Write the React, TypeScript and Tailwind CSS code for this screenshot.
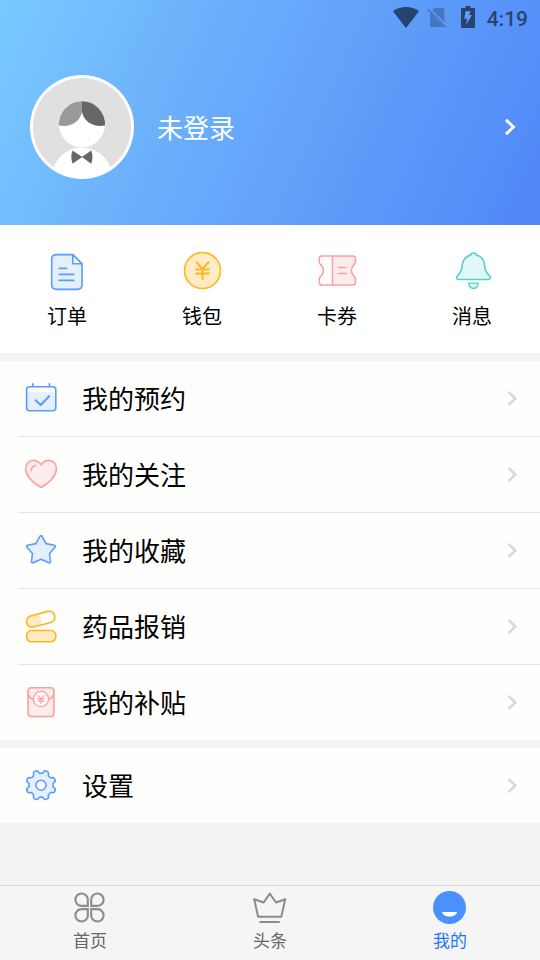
import type { ReactNode } from "react";

interface Item {
  label: string;
  icon: ReactNode;
}

const BLUE = "#5a9cff";
const BLUE_FILL = "#e6effd";
const PINK = "#ff9f9f";
const PINK_FILL = "#fdecec";
const YELLOW = "#ffb51c";
const YELLOW_FILL = "#ffecc5";
const TEAL = "#55d2cf";
const TEAL_FILL = "#e1f8f7";

// Eight rounded teeth around the center
const gearPoints = Array.from({ length: 144 }, (_, i) => {
  const a = (i / 144) * Math.PI * 2;
  const r = 13.45 - 1.6 * Math.tanh(2.2 * Math.cos(8 * a));
  return `${(20.2 + r * Math.sin(a)).toFixed(2)},${(20.2 - r * Math.cos(a)).toFixed(2)}`;
}).join(" ");

function QuickIcon({ children }: { children: ReactNode }) {
  return (
    <svg width="41" height="40" viewBox="0 0 41 40" fill="none" strokeWidth="1.6" strokeLinecap="round" strokeLinejoin="round">
      {children}
    </svg>
  );
}

function RowIcon({ children }: { children: ReactNode }) {
  return (
    <svg width="41" height="41" viewBox="0.2 0 41 41" fill="none" strokeWidth="1.6" strokeLinecap="round" strokeLinejoin="round">
      {children}
    </svg>
  );
}

const quickItems: Item[] = [
  {
    label: "订单",
    icon: (
      <QuickIcon>
        <g stroke={BLUE}>
          <path d="M9.3 3.6H25.8L35.1 12.8V33.8Q35.1 38.4 30.5 38.4H9.3Q4.7 38.4 4.7 33.8V8.2Q4.7 3.6 9.3 3.6Z" fill={BLUE_FILL} />
          <path d="M25.8 3.8V12.7H34.8Z" fill="#fff" />
          <path d="M12.2 17.4H19.6M12.2 23.4H27M12.2 29.4H27" />
        </g>
      </QuickIcon>
    ),
  },
  {
    label: "钱包",
    icon: (
      <QuickIcon>
        <g stroke={YELLOW}>
          <circle cx="20.5" cy="19.5" r="18" fill={YELLOW_FILL} />
          <path d="M14.6 11.4L20.5 18.2L26.4 11.4M20.5 18.2V28.2M14.2 18.4H26.9M14.2 22.6H26.9" strokeWidth="2" />
        </g>
      </QuickIcon>
    ),
  },
  {
    label: "卡券",
    icon: (
      <QuickIcon>
        <path d="M15.3 5H35.8Q38.5 5 38.5 8V11.7C38.5 14 34.3 14.5 34.3 19.5C34.3 24.5 38.5 25 38.5 27.3V31.2Q38.5 34 35.8 34H15.3Z" fill={PINK_FILL} />
        <g stroke={PINK}>
          <path d="M5 5H35.8Q38.5 5 38.5 7.6V11.2C38.5 13.7 34.3 14.5 34.3 19.5C34.3 24.5 38.5 25.3 38.5 27.8V31.4Q38.5 34 35.8 34H5Q2.3 34 2.3 31.4V27.8C2.3 25.3 6.5 24.5 6.5 19.5C6.5 14.5 2.3 13.7 2.3 11.2V7.6Q2.3 5 5 5Z" />
          <path d="M15.4 5V34M21.4 16.6H29M21.4 22.4H29" strokeWidth="1.5" />
        </g>
      </QuickIcon>
    ),
  },
  {
    label: "消息",
    icon: (
      <QuickIcon>
        <g stroke={TEAL} fill={TEAL_FILL}>
          <path d="M18.7 4.1C19.2 1.2 23.8 1.2 24.3 4.1C30 5.6 32.4 9.6 32.6 14.4C32.8 19.5 34 21.6 37.3 24.7C39.3 26.6 38.3 28.5 36.3 28.5H6.7C4.5 28.5 3.8 26.5 5.5 24.7C8.7 21.6 10 19.3 10.2 14.4C10.5 9.6 12.8 5.6 18.7 4.1Z" />
          <path d="M16.7 32.1H26.2C26.3 39.2 16.6 39.2 16.7 32.1Z" strokeWidth="1.4" />
        </g>
      </QuickIcon>
    ),
  },
];

const menuItems: Item[] = [
  {
    label: "我的预约",
    icon: (
      <RowIcon>
        <path d="M6 14.3H35V31Q35 33 33 33H8Q6 33 6 31Z" fill={BLUE_FILL} />
        <g stroke={BLUE}>
          <rect x="5.8" y="8.8" width="29.2" height="24" rx="3" />
          <path d="M12 5.9V8.3M28.6 5.9V8.3" strokeWidth="1.8" />
          <path d="M14.8 22.3L19.9 27L28.4 18.2" strokeWidth="2.1" />
        </g>
      </RowIcon>
    ),
  },
  {
    label: "我的关注",
    icon: (
      <RowIcon>
        <g stroke={PINK}>
          <path d="M20.3 10.8C22.3 7.6 25 6.4 28 6.4C32.6 6.4 35.6 10 35.6 14.7C35.6 22.5 29.2 28.2 20.3 33.5C11.2 28.2 4.9 22.5 4.9 14.7C4.9 10 8 6.4 12.6 6.4C15.6 6.4 18.3 7.6 20.3 10.8Z" fill={PINK_FILL} />
          <path d="M10.3 16.7C10.5 13.8 12.2 12 14.8 11.5" />
        </g>
      </RowIcon>
    ),
  },
  {
    label: "我的收藏",
    icon: (
      <RowIcon>
        <path
          d="M19.2 6.2Q20.2 4.9 21.2 6.2L25.3 13.6L33.5 15.3Q35.2 15.8 34.3 17.3L28.7 23.5L29.7 31.5Q29.8 33.3 28.1 32.8L20.2 29.2L12.3 32.8Q10.6 33.3 10.7 31.5L11.7 23.5L6.1 17.3Q5.2 15.8 6.9 15.3L15.1 13.6Z"
          fill={BLUE_FILL}
          stroke={BLUE}
        />
      </RowIcon>
    ),
  },
  {
    label: "药品报销",
    icon: (
      <RowIcon>
        <g stroke={YELLOW}>
          <g transform="rotate(-15 19.8 13.2)">
            <path d="M20 7.5H11Q5.2 7.8 5.2 13.2Q5.2 18.9 11 18.9H20Z" fill={YELLOW_FILL} stroke="none" />
            <rect x="5.4" y="7.5" width="29" height="11.4" rx="5.7" />
          </g>
          <rect x="5.8" y="24.5" width="29.2" height="11.3" rx="5" fill={YELLOW_FILL} />
        </g>
      </RowIcon>
    ),
  },
  {
    label: "我的补贴",
    icon: (
      <RowIcon>
        <g stroke={PINK}>
          <rect x="7.3" y="5.7" width="25.8" height="28.8" rx="3.2" fill={PINK_FILL} />
          <path d="M7.5 12.8C8.6 15.3 10.5 17 12.8 17.7M32.9 12.8C31.8 15.3 29.9 17 27.6 17.7" />
          <circle cx="20.2" cy="17" r="7.6" fill="#fff" strokeWidth="1.4" />
          <path d="M17.5 13.7L20.2 16.8L22.9 13.7M20.2 16.8V21.5M16.9 16.8H23.5M16.9 19.1H23.5" strokeWidth="1.2" />
        </g>
      </RowIcon>
    ),
  },
];

const settingsItem: Item = {
  label: "设置",
  icon: (
    <RowIcon>
      <g stroke={BLUE}>
        <polygon points={gearPoints} fill={BLUE_FILL} />
        <circle cx="20.2" cy="20.2" r="5" fill="#fff" />
      </g>
    </RowIcon>
  ),
};

const tabs: Item[] = [
  {
    label: "首页",
    icon: (
      <g stroke="#8c8c8c" strokeWidth="2.1">
        <path d="M17.8 15.9H11.4A6.2 6.2 0 1 1 17.8 9.5Z" />
        <path d="M21.2 15.9V9.5A6.2 6.2 0 1 1 27.5 15.9Z" />
        <path d="M17.8 19.1V25.4A6.2 6.2 0 1 1 11.4 19.1Z" />
        <path d="M21.2 19.1H27.5A6.2 6.2 0 1 1 21.2 25.4Z" />
      </g>
    ),
  },
  {
    label: "头条",
    icon: (
      <g stroke="#8c8c8c" strokeWidth="2" strokeLinecap="round" strokeLinejoin="round">
        <path d="M4.2 9.3L13.6 12.5L19.8 3.6L26 12.5L35.2 9.3L31.3 26.8H8.1Z" />
        <path d="M10.2 32H29" />
      </g>
    ),
  },
  {
    label: "我的",
    icon: (
      <>
        <circle cx="19.5" cy="17.5" r="16.5" fill="#4a90ff" />
        <path d="M12 22H27C26 28.2 13 28.2 12 22Z" fill="#fff" />
      </>
    ),
  },
];

function MenuRow({ item, last }: { item: Item; last: boolean }) {
  return (
    <div className="bg-[#fefefd]">
      <a href="#" className="flex h-[75px] items-center pl-[21px] pr-[21px]">
        {item.icon}
        <span className="ml-5 pt-0.5 text-[26px] leading-[38px] text-black">{item.label}</span>
        <svg className="ml-auto" width="13" height="17" viewBox="0 0 13 17" fill="none" stroke="#d9d9d9" strokeWidth="2.6">
          <path d="M2.6 2L9.2 8.5L2.6 15" />
        </svg>
      </a>
      {!last && <div className="ml-[18px] h-px bg-[#e5e5e5]" />}
    </div>
  );
}

export default function App() {
  return (
    <div className="flex h-[960px] w-[540px] flex-col overflow-hidden bg-[#f3f3f3] font-[Roboto,'Noto_Sans_CJK_SC',sans-serif]">
      {/* Profile header */}
      <header className="h-[225px] shrink-0 bg-[linear-gradient(114deg,#7ac9ff_0%,#6aaefb_37%,#4f87f7_100%)]">
        {/* Status bar */}
        <div className="flex h-9 items-center justify-end pr-3 text-[#27446f]">
          <svg className="mb-0.5" width="26" height="21" viewBox="0 0 26 21" fill="currentColor">
            <path d="M0 4.2C7.5 -1.4 18.5 -1.4 26 4.2L13 21Z" />
          </svg>
          <svg className="mb-px ml-2" width="21" height="20" viewBox="0 0 21 20">
            <path d="M7.5 0H16Q17.5 0 17.5 1.5V14.2L5.2 2.2ZM3 4.8L16.5 18.4Q16.3 19 15.5 19H4.5Q3 19 3 17.5Z" fill="#4678bf" />
            <path d="M1 1.4L19 19.6" stroke="#4678bf" strokeWidth="1.7" />
          </svg>
          <svg className="mb-0.5 ml-[13px]" width="14" height="22" viewBox="0 0 14 22">
            <path d="M4.5 0H9.5V2H13Q14 2 14 3V21Q14 22 13 22H1Q0 22 0 21V3Q0 2 1 2H4.5Z" fill="currentColor" />
            <path d="M4.5 5.2H9.6L8.2 9H11L5 19L6.2 12.8H3.3Z" fill="#5f9efa" />
          </svg>
          <span className="ml-3 pt-0.5 text-[21px] font-medium leading-none">4:19</span>
        </div>

        <div className="flex h-[182px] items-center pl-[30px] pr-[22px]">
          <svg width="104" height="104" viewBox="0 0 104 104">
            <defs>
              <clipPath id="avatar">
                <circle cx="52" cy="52" r="49.5" />
              </clipPath>
            </defs>
            <circle cx="52" cy="52" r="52" fill="#fff" />
            <circle cx="52" cy="52" r="49" fill="#e0e0e0" />
            <g clipPath="url(#avatar)">
              <circle cx="52" cy="102.5" r="30" fill="#fff" />
              <circle cx="52" cy="49.5" r="23" fill="#fff" />
            </g>
            <path d="M52 26.2A23 23 0 0 0 29 50.5C40 52.5 50 47 52 37Z" fill="#999" />
            <path d="M52 26.2A23 23 0 0 1 75 50.5C64 52.5 54 47 52 37Z" fill="#666" />
            <path d="M42.6 75.6L51.4 81.4H52.6L61.2 75.6Q63.8 82 61.2 88.8L52.6 82.6H51.4L42.6 88.8Q40 82 42.6 75.6Z" fill="#666" />
          </svg>
          <span className="ml-[23px] pt-1 text-[26px] leading-[38px] text-white">未登录</span>
          <svg className="ml-auto" width="16" height="20" viewBox="0 0 16 20" fill="none" stroke="#fff" strokeWidth="3">
            <path d="M4 2.8L11.5 10L4 17.2" />
          </svg>
        </div>
      </header>

      {/* Shortcuts */}
      <section className="grid h-32 shrink-0 grid-cols-4 bg-white pt-[26px]">
        {quickItems.map((item) => (
          <a key={item.label} href="#" className="flex flex-col items-center">
            {item.icon}
            <span className="mt-[11px] pr-px text-xl leading-[30px] text-black">{item.label}</span>
          </a>
        ))}
      </section>

      <section className="mt-2 shrink-0">
        {menuItems.map((item, i) => (
          <MenuRow key={item.label} item={item} last={i === menuItems.length - 1} />
        ))}
      </section>

      <section className="mt-2 shrink-0">
        <MenuRow item={settingsItem} last />
      </section>

      {/* Bottom tabs */}
      <nav className="mt-auto grid h-[75px] shrink-0 grid-cols-3 border-t border-[#d8d8d8] bg-[#f5f5f5] pt-1">
        {tabs.map((tab, i) => (
          <a
            key={tab.label}
            href="#"
            className={`flex flex-col items-center text-[17px] leading-6 ${i === 2 ? "text-[#1e75f5]" : "text-[#666]"}`}
          >
            <svg width="40" height="36" viewBox="0 0 40 36" fill="none">
              {tab.icon}
            </svg>
            <span className="mt-[3px]">{tab.label}</span>
          </a>
        ))}
      </nav>
    </div>
  );
}
